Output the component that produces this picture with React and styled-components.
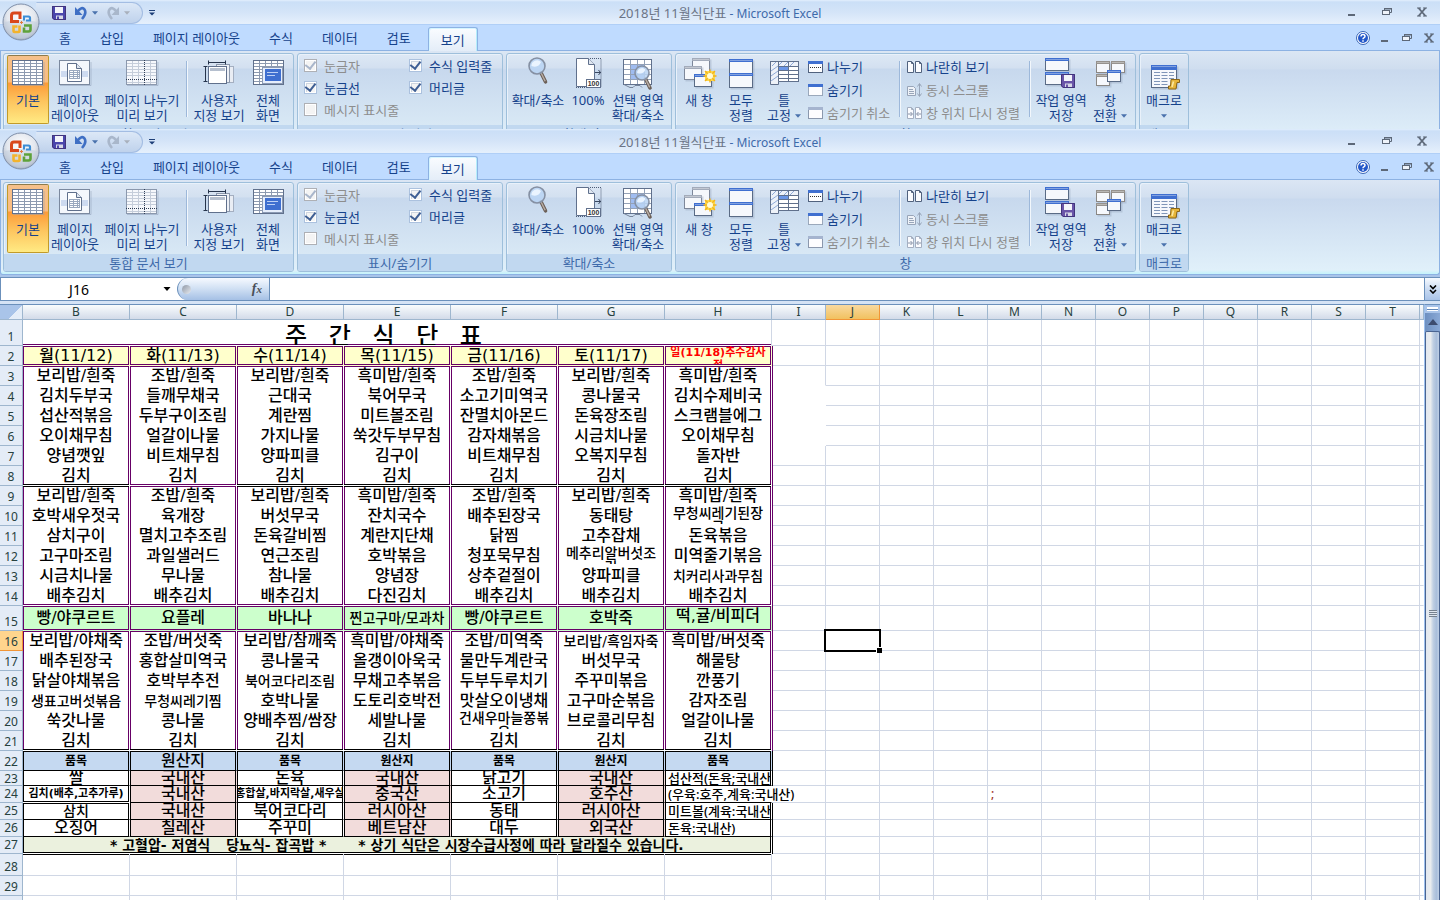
import React from "react";
import styled, { createGlobalStyle, css } from "styled-components";

const uiFont = `"Noto Sans", "Noto Sans CJK KR", sans-serif`;
const sheetFont = `"DejaVu Sans", "Noto Sans CJK KR", sans-serif`;
const koreanFont = `"Noto Sans CJK KR", sans-serif`;
const navy = "#15428b";
const purple = "#660066";

const GlobalStyle = createGlobalStyle`
  * { box-sizing: border-box; }
  html, body, #root { margin: 0; height: 100%; }
  body { overflow: hidden; background: #fff; font-family: ${uiFont}; }
  button, input { font: inherit; color: inherit; margin: 0; padding: 0; border: 0; background: none; border-radius: 0; outline: none; }
  button { cursor: pointer; }
  svg { flex: none; }
`;

/* ---------- window chrome ---------- */

const Page = styled.div`
  display: flex;
  flex-direction: column;
  height: 100vh;
`;

const RibbonFrame = styled.header`
  position: relative;
  flex: none;
  height: ${(p) => (p.$clipped ? "129px" : "148px")};
  overflow: hidden;
  background: #a9c4e9;
  color: ${navy};
  font-size: 13px;
`;

const TitleBar = styled.div`
  display: grid;
  grid-template-columns: 1fr auto 1fr;
  align-items: center;
  height: 25px;
  padding: 0 11px;
  background: linear-gradient(#e3effd 0, #cbdff7 2px, #d4e4f8 50%, #e4effc 96%);
  border-bottom: 1px solid #b0cff7;
`;

const QuickBar = styled.div`
  display: flex;
  align-items: center;
  height: 24px;
  padding: 1px 0 0 25px;
`;

const QuickPill = styled.div`
  display: flex;
  align-items: center;
  gap: 8px;
  width: 107px;
  height: 22px;
  padding: 0 10px 0 15px;
  border: 1px solid #a3bde3;
  border-left-color: transparent;
  border-radius: 0 11px 11px 0;
  background: linear-gradient(#dce8f7, #bfd2ec);
`;

const QuickPair = styled.div`
  display: flex;
  align-items: center;
  gap: 4px;
`;

const IconButton = styled.button`
  display: flex;
  align-items: center;
  justify-content: center;
  width: ${(p) => p.$w || 14}px;
  height: 16px;
`;

const WindowTitle = styled.h1`
  margin: 0;
  padding-top: 2px;
  font-size: 12px;
  line-height: 16px;
  font-weight: 400;
  color: #3e6aaa;
  white-space: pre;
`;

const FileName = styled.span`
  font-size: 13px;
  color: #6b7486;
`;

const WindowButtons = styled.div`
  display: flex;
  justify-content: flex-end;
  align-items: center;
  gap: ${(p) => p.$gap}px;
`;

const OfficeButton = styled.button`
  position: absolute;
  left: 2px;
  top: 3px;
  width: 40px;
  height: 40px;
`;

const TabRow = styled.nav`
  display: flex;
  align-items: flex-end;
  gap: 5px;
  height: 26px;
  padding: 0 4px 0 47px;
  background: #bfdbff;
  border-bottom: 1px solid #8db2e3;
`;

const Tab = styled.button`
  height: 23px;
  padding: 0 12px;
  line-height: 23px;
  white-space: nowrap;
  ${(p) =>
    p.$active &&
    css`
      height: 24px;
      margin-bottom: -1px;
      border: 1px solid #8db2e3;
      border-bottom: 0;
      border-radius: 3px 3px 0 0;
      background: linear-gradient(#fafcff, #e4edf8);
      box-shadow: inset 1px 1px 0 #d5f5ff, inset -1px 0 0 #b5eefc;
      line-height: 22px;
    `}
`;

const TabTools = styled.div`
  display: flex;
  align-items: center;
  gap: 8px;
  margin-left: auto;
  height: 25px;
`;

const RibbonBody = styled.div`
  display: flex;
  gap: 3px;
  height: 95px;
  padding: 2px 2px 3px;
  border: solid #8db2e3;
  border-width: 0 1px 1px;
  border-radius: 0 0 3px 3px;
  background: linear-gradient(#dbe6f4 0, #cfddef 18px, #c9d9ee 19px, #e0f0fa 90px, #c3f3fb 94px);
`;

const Group = styled.section`
  display: flex;
  flex-direction: column;
  flex: none;
  width: ${(p) => p.$w}px;
  height: 90px;
  border: 1px solid #9ebfdb;
  border-radius: 3px;
  box-shadow: inset 1px 1px 0 #e9f1fa;
  background: linear-gradient(#dde8f5 0, #d3e0f0 14px, #c7d8ed 15px, #d8e8f5 71px);
  overflow: hidden;
`;

const GroupBody = styled.div`
  display: flex;
  align-items: flex-start;
  height: 71px;
  padding: 1px 3px 0;
`;

const GroupLabel = styled.h2`
  margin: 0;
  height: 17px;
  padding-top: 1px;
  line-height: 17px;
  font-size: 13px;
  font-weight: 400;
  text-align: center;
  color: #3e6aaa;
  background: #c1d8f0;
`;

const BigButton = styled.button`
  display: flex;
  flex-direction: column;
  align-items: center;
  flex: none;
  width: ${(p) => p.$w}px;
  height: 69px;
  padding-top: 2px;
  line-height: 15px;
  white-space: nowrap;
  ${(p) =>
    p.$on &&
    css`
      border: 1px solid #c29b29;
      border-top-color: #8e7a4a;
      border-radius: 2px;
      padding-top: 1px;
      background: linear-gradient(#f5c08b 0, #fbbd80 26px, #fd9a38 27px, #fdc45e 45px, #ffea83 67px);
    `}
`;

const BigIcon = styled.svg`
  display: block;
  flex: none;
  width: 32px;
  height: 32px;
  margin-bottom: 4px;
`;

const Caption = styled.span`
  display: flex;
  align-items: center;
  gap: 4px;
  height: 15px;
`;

const Separator = styled.div`
  flex: none;
  width: 2px;
  height: 56px;
  margin: 6px 3px 0;
  border-left: 1px solid #9db8da;
  border-right: 1px solid #f2f7fc;
`;

const CheckGrid = styled.div`
  display: grid;
  grid-template-columns: 105px auto;
  grid-auto-rows: 22px;
  padding-left: 3px;
`;

const CheckLabel = styled.label`
  display: flex;
  align-items: center;
  gap: 7px;
  height: 20px;
  white-space: nowrap;
  color: ${(p) => (p.$off ? "#8d8d8d" : navy)};
`;

const CheckBox = styled.input`
  appearance: none;
  display: grid;
  place-items: center;
  flex: none;
  width: 13px;
  height: 13px;
  border: 1px solid #abc1de;
  background: #f4f4f4;
  box-shadow: inset 0 0 0 1px #fff, inset 2px 2px 0 #cfd6e0;
  &:disabled { border-color: #aeb0b5; box-shadow: inset 0 0 0 1px #fff; }
  &:checked::before {
    content: "";
    width: 5px;
    height: 8px;
    margin-top: -2px;
    border: solid #3f5f94;
    border-width: 0 2px 2px 0;
    transform: rotate(38deg);
  }
  &:disabled:checked::before { border-color: #a9b6cb; }
`;

const SmallColumn = styled.div`
  display: grid;
  grid-auto-rows: 23px;
  flex: none;
  width: ${(p) => p.$w}px;
  padding-left: 3px;
`;

const SmallButton = styled.button`
  display: flex;
  align-items: center;
  gap: 3px;
  line-height: 16px;
  white-space: nowrap;
  color: ${(p) => (p.disabled ? "#8d8d8d" : navy)};
`;

/* ---------- formula bar ---------- */

const FormulaBar = styled.div`
  display: flex;
  flex: none;
  height: 24px;
  border: solid #6b90bb;
  border-width: 1px 0 1px 1px;
  background: #fff;
`;

const NameBox = styled.div`
  display: flex;
  align-items: center;
  width: 176px;
`;

const NameInput = styled.input`
  width: 156px;
  height: 22px;
  font-size: 14px;
  text-align: center;
  color: #000;
`;

const FxCap = styled.div`
  display: flex;
  align-items: center;
  justify-content: space-between;
  width: 93px;
  padding: 0 7px 0 4px;
  border: solid #6b90bb;
  border-width: 0 1px 0 1px;
  border-radius: 11px 0 0 11px;
  background: linear-gradient(#f6faff, #cfdff3 50%, #a5c0e5);
`;

const Knob = styled.span`
  width: 9px;
  height: 9px;
  border-radius: 50%;
  background: linear-gradient(135deg, #8f98a6, #e8ebf0);
`;

const FxButton = styled.button`
  font: italic 700 14px/20px "Liberation Serif", serif;
  color: #4a4f58;
`;

const FxSub = styled.span`
  font-size: 11px;
`;

const FormulaInput = styled.input`
  flex: 1;
  min-width: 0;
  height: 22px;
  color: #000;
`;

const ExpandButton = styled.button`
  display: flex;
  align-items: center;
  justify-content: center;
  width: 16px;
  height: 22px;
  border-left: 1px solid #6b90bb;
  background: linear-gradient(#f6faff, #c3d6f0 60%, #a9c3e8);
`;

/* ---------- sheet ---------- */

const Workspace = styled.main`
  display: flex;
  flex: 1;
  min-height: 0;
  border-top: 3px solid #d5e3f5;
`;

const SheetArea = styled.div`
  flex: 1;
  min-width: 0;
  overflow: hidden;
  border-top: 1px solid #6b90bb;
`;

const Sheet = styled.table`
  width: 100%;
  table-layout: fixed;
  border-collapse: separate;
  border-spacing: 0;
  font-family: ${sheetFont};
  color: #000;
`;

const Col = styled.col`
  width: ${(p) => (p.$w ? `${p.$w}px` : "auto")};
`;

const Row = styled.tr`
  height: ${(p) => p.$h}px;
`;

const Corner = styled.td`
  height: 15px;
  padding: 0;
  border: solid #9eb6ce;
  border-width: 0 1px 1px 0;
  background: linear-gradient(135deg, #a9c4e9 62%, #e4edf8 63%);
`;

const ColHead = styled.th`
  height: 15px;
  padding: 0;
  font: 400 12px/14px ${uiFont};
  color: #27413e;
  border: solid ${(p) => (p.$on ? "#f29536" : "#9eb6ce")};
  border-width: 0 1px 1px 0;
  background: ${(p) => (p.$on ? "linear-gradient(#f9d99f, #f1c15f)" : "linear-gradient(#f9fcfd, #d3dbe9)")};
`;

const RowHead = styled.th`
  padding: 0;
  font: 400 12px/15px ${uiFont};
  color: #27413e;
  vertical-align: bottom;
  border: solid ${(p) => (p.$on ? "#f29536" : "#9eb6ce")};
  border-width: 0 1px 1px 0;
  background: ${(p) => (p.$on ? "#ffd58d" : "#e4ecf7")};
`;

const RowHeadText = styled.div`
  height: ${(p) => (p.$h < 17 ? 14 : 16)}px;
`;

const edges = ({ $l, $r, $t, $b }) =>
  [
    $t && `inset 0 1px 0 ${$t}`,
    $b && `inset 0 -1px 0 ${$b}`,
    $l && `inset 1px 0 0 ${$l}`,
    $r && `inset -1px 0 0 ${$r}`,
  ]
    .filter(Boolean)
    .join(", ") || "none";

const Cell = styled.td`
  position: relative;
  padding: 0;
  vertical-align: top;
  background: ${(p) => p.$bg || "#fff"};
  border-right: 1px solid ${(p) => p.$gapR || "#d0d7e5"};
  border-bottom: ${(p) => (p.$open ? "0" : `1px solid ${p.$gapB || "#d0d7e5"}`)};
  box-shadow: ${edges};
  ${(p) =>
    p.$outline &&
    css`
      &::before {
        content: "";
        position: absolute;
        left: 0;
        top: 0;
        bottom: -1px;
        width: 1px;
        background: ${p.$outline};
      }
    `}
`;

const CellText = styled.div`
  display: flex;
  justify-content: ${(p) => (p.$left ? "flex-start" : "center")};
  align-items: ${(p) => (p.$top ? "flex-start" : "center")};
  height: ${(p) => p.$h}px;
  margin: 0 1px;
  padding-left: ${(p) => (p.$left ? 2 : 0)}px;
  overflow: ${(p) => (p.$spill ? "visible" : "hidden")};
  text-align: center;
  white-space: pre;
  font-family: ${(p) => (p.$left ? uiFont : sheetFont)};
  font-size: ${(p) => p.$size || 16}px;
  line-height: ${(p) => p.$lh || 18}px;
  font-weight: ${(p) => p.$weight || 500};
  color: ${(p) => p.$color || "#000"};
`;

const SheetTitle = styled(CellText)`
  font-family: ${koreanFont};
  padding-top: 2px;
`;

const NoteText = styled(CellText)`
  gap: 16px;
  justify-content: flex-start;
  padding-left: 86px;
`;

const Cursor = styled.div`
  position: absolute;
  z-index: 1;
  inset: -2px;
  border: 2px solid #000;
  &::after {
    content: "";
    position: absolute;
    right: -3px;
    bottom: -3px;
    width: 5px;
    height: 5px;
    background: #000;
    border: solid #fff;
    border-width: 1px 0 0 1px;
  }
`;

const ScrollColumn = styled.div`
  display: flex;
  flex-direction: column;
  flex: none;
  width: 16px;
  border-left: 1px solid #9dc0ee;
  border-top: 1px solid #6b90bb;
  background: #7a9ccb;
`;

const SplitHandle = styled.div`
  height: 8px;
  border: 2px solid #a9c4e9;
  background: #fff;
  box-shadow: inset 0 2px 0 #fff, inset 0 3px 0 #5f86b8;
`;

const ScrollButton = styled.button`
  display: flex;
  align-items: center;
  justify-content: center;
  height: 18px;
  background: linear-gradient(90deg, #6d8fc0, #8aa9d6);
`;

const Thumb = styled.div`
  display: flex;
  flex: 1;
  align-items: center;
  justify-content: center;
  border: 1px solid #4a6491;
  border-bottom: 0;
  border-radius: 2px 2px 0 0;
  background: linear-gradient(90deg, #e3e8ef 0, #e9ecef 35%, #c0cfe3 55%, #a9bedb 80%, #bfcfe6);
`;

const Grip = styled.div`
  width: 8px;
  height: 7px;
  margin-bottom: 6px;
  background: repeating-linear-gradient(#76818f 0 1px, #dfe6ef 1px 2px);
`;

/* ---------- drawings ---------- */

const Arrow = ({ color = "#4a72ad", w = 7 }) => (
  <svg width={w} height="4" viewBox="0 0 7 4"><path d="M0 0h7L3.5 4z" fill={color} /></svg>
);

const lines = (xs, ys, x0, y0, x1, y1) =>
  xs.map((x) => `M${x} ${y0}V${y1}`).join("") + ys.map((y) => `M${x0} ${y}H${x1}`).join("");

const Win = ({ x, y, w, h, c = "#3f6fd0", s = "#5a6b85", bar = 3 }) => (
  <g>
    <rect x={x + 1.5} y={y + 1.5} width={w} height={h} fill="#8b9bb5" opacity="0.35" />
    <rect x={x + 0.5} y={y + 0.5} width={w - 1} height={h - 1} fill="#f6f8fc" stroke={s} />
    <rect x={x} y={y} width={w} height={bar} fill={c} />
    <path d={`M${x + 1} ${y + 1.5}h${w - 2}`} stroke="#fff" opacity="0.35" />
  </g>
);

const Lens = ({ cx, cy, r }) => (
  <g>
    <path d={`M${cx + r * 0.5} ${cy + r * 0.85}l4.5 9`} stroke="#6c6058" strokeWidth="3.6" strokeLinecap="round" />
    <path d={`M${cx + r * 0.5} ${cy + r * 0.85}l4.2 8.4`} stroke="#b9aea6" strokeWidth="1.4" />
    <circle cx={cx} cy={cy} r={r} fill="#b9d4f3" fillOpacity="0.85" stroke="#8590a3" strokeWidth="1.6" />
    <path d={`M${cx - r * 0.7} ${cy}a${r * 0.7} ${r * 0.7} 0 0 1 ${r * 1.2} ${-r * 0.5}q-${r * 0.3} ${r * 0.8} -${r * 1.2} ${r * 0.5}`} fill="#eaf4ff" />
  </g>
);

const Floppy = ({ x, y, s = 14, c = "#6a55a8" }) => (
  <g transform={`translate(${x} ${y}) scale(${s / 14})`}>
    <path d="M0 0h14v14H2l-2-2z" fill={c} />
    <path d="M3 1h8v6H3z" fill="#f3f4fa" />
    <path d="M4 9.5h7V14H4z" fill="#d7d9e6" />
    <path d="M5 10.5h2V14H5z" fill={c} />
    <path d="M0.5 0.5h13v13H2.2l-1.7-1.7z" fill="none" stroke="#42347c" />
  </g>
);

const bigIcons = {
  normal: (
    <g>
      <rect x="0.5" y="3.5" width="30" height="24" fill="#fff" stroke="#60708c" />
      <path d={lines([6.5, 12.5, 18.5, 24.5], [6.5, 9.5, 12.5, 15.5, 18.5, 21.5, 24.5], 1, 4, 30, 27)} stroke="#8d9ab0" />
      <path d="M1 28.5h31V5" stroke="#8b9bb5" fill="none" opacity="0.5" />
    </g>
  ),
  pageLayout: (
    <g>
      <rect x="0.5" y="3.5" width="30" height="24" fill="#f4f7fc" stroke="#7b899f" />
      <path d="M2 14h27v6H2z" fill="#cddaf0" />
      <path d="M8.5 6.5h9l5 5v13h-14z" fill="#fff" stroke="#60708c" />
      <path d="M17.5 6.5v5h5" fill="#dfe6f0" stroke="#60708c" />
      <path d={lines([10.5, 14.5, 18.5, 20.5], [13.5, 15.5, 17.5, 19.5, 21.5], 10, 13, 21, 22)} stroke="#9aa8be" />
      <path d="M1 28.5h31V5" stroke="#8b9bb5" fill="none" opacity="0.5" />
    </g>
  ),
  pageBreak: (
    <g>
      <rect x="0.5" y="3.5" width="30" height="24" fill="#f6f8fc" stroke="#8b98ad" />
      <path d={lines([6.5, 12.5, 24.5], [6.5, 9.5, 12.5, 15.5, 18.5, 25.5], 1, 4, 30, 27)} stroke="#c5cdda" />
      <path d="M18.5 3v25M0 22.5h31" stroke="#2f3d55" strokeDasharray="1 1" />
      <path d="M1 28.5h31V5" stroke="#8b9bb5" fill="none" opacity="0.5" />
    </g>
  ),
  custom: (
    <g fill="none">
      <rect x="16.5" y="9.5" width="14" height="16" fill="#e9edf4" stroke="#a4afc1" />
      <rect x="13.5" y="7.5" width="13" height="18" fill="#eef1f7" stroke="#8c98ac" />
      <rect x="5.5" y="9.5" width="18" height="17" fill="#fff" stroke="#60708c" />
      <rect x="7" y="11" width="15" height="3" fill="#b5bfce" />
      <path d="M5 5.5h18M5.5 3.5v4M22.5 3.5v4M2.5 9v16M0.5 9.5h4M0.5 24.5h4" stroke="#26344c" />
    </g>
  ),
  full: (
    <g>
      <rect x="1.5" y="3.5" width="30" height="24" fill="#fff" stroke="#60708c" />
      <path d={lines([7.5, 13.5, 19.5, 25.5], [6.5, 9.5, 12.5, 15.5, 18.5, 21.5, 24.5], 2, 4, 31, 27)} stroke="#8d9ab0" />
      <rect x="10.5" y="10.5" width="20" height="16" fill="#e6eefc" stroke="#8c9bb5" />
      <rect x="13" y="12" width="16" height="12" fill="#3f6fd0" />
      <path d="M15 15.5h11M15 18.5h8" stroke="#bdd0f5" />
    </g>
  ),
  zoom: <Lens cx={15} cy={9} r={8} />,
  hundred: (
    <g>
      <path d="M4.5 1.5h12l6 6v22h-18z" fill="#fff" stroke="#60708c" />
      <path d="M16.5 1.5v6h6" fill="#dfe6f0" stroke="#60708c" />
      <path d="M18 1.5h11v28M4 30.5h12" stroke="#4c5b75" strokeDasharray="1 1" fill="none" />
      <path d="M23 15.5h6M26.5 13l2 2.5-2 2.5" stroke="#3a4860" fill="none" />
      <rect x="14.5" y="22.5" width="14" height="8" fill="#fff" stroke="#60708c" />
      <text x="21.5" y="29" textAnchor="middle" fontSize="7" fontWeight="700" fontFamily="Liberation Sans, sans-serif" fill="#333">100</text>
    </g>
  ),
  selection: (
    <g>
      <rect x="1.5" y="2.5" width="28" height="25" fill="#fff" stroke="#60708c" />
      <rect x="9" y="8" width="14" height="14" fill="#9fbcf0" />
      <path d={lines([8.5, 15.5, 22.5], [7.5, 12.5, 17.5, 22.5], 2, 3, 29, 27)} stroke="#93a1b7" />
      <path d="M2 27.5l6 3h3l2-2h5l2 2" fill="none" stroke="#76849a" />
      <Lens cx={20} cy={16} r={7} />
    </g>
  ),
  newWindow: (
    <g>
      <Win x={9} y={1} w={18} h={17} c="#a3abba" s="#7d879a" />
      <Win x={1} y={9} w={18} h={14} c="#a3abba" s="#7d879a" />
      <Win x={11} y={17} w={18} h={13} />
      <path d="M22 14h10v10H22z" fill="#fbd84a" />
      <path d="M27 12.500v13M20.500 19h13M22 14l10 10M32 14l-10 10" stroke="#f2b21c" strokeWidth="1.400" />
      <circle cx="27" cy="19" r="3" fill="#fffbd6" />
    </g>
  ),
  arrange: (
    <g>
      <Win x={4} y={2} w={24} h={15} />
      <Win x={4} y={16} w={24} h={15} />
    </g>
  ),
  freeze: (
    <g>
      <rect x="2.5" y="4.5" width="28" height="20" fill="#fff" stroke="#60708c" />
      <path d="M3 5h27v4H11v18H3z" fill="#eef2f9" />
      <path d="M4 9l4-4M10 9l4-4M16 9l4-4M22 9l4-4M3 14l7-5M3 19l7-5M3 24l7-5" stroke="#8ea9d8" />
      <path d={lines([10.5, 20.5], [9.5, 13.5, 17.5, 21.5], 10, 5, 30, 25)} stroke="#60708c" />
      <rect x="11" y="10" width="9" height="3" fill="#6b96e6" />
      <path d="M2.500 24.500v3h8v-3" fill="#eef2f8" stroke="#60708c" />
    </g>
  ),
  workspace: (
    <g>
      <Win x={0} y={1} w={24} h={13} />
      <Win x={0} y={15} w={24} h={13} />
      <Floppy x={16} y={17} s={14} />
    </g>
  ),
  switchWin: (
    <g>
      <Win x={2} y={4} w={14} h={12} c="#96928e" s="#8a8784" />
      <Win x={17} y={4} w={14} h={12} c="#96928e" s="#8a8784" />
      <Win x={2} y={17} w={14} h={12} c="#96928e" s="#8a8784" />
      <Win x={13} y={13} w={14} h={12} />
    </g>
  ),
  macro: (
    <g>
      <Win x={3} y={8} w={26} h={23} bar={5} />
      <path d="M6 15.5h6M6 18.5h6M6 21.5h6M6 24.5h6M6 27.5h6M13.5 15.5h6M13.5 18.5h6M13.5 21.5h6M13.5 24.5h6M13.5 27.5h6M21 15.5h5M21 18.5h5M21 21.5h5" stroke="#7f95b8" />
      <path d="M23 22.5h8.5v3H29l-1 6.500h-7.500v-3h2z" fill="#e6b53a" stroke="#8a6516" />
      <path d="M25.5 24.500l-1.500 5.500" stroke="#fbe8a0" strokeWidth="1.600" />
    </g>
  ),
};

const smallWin = (c, s, dash, mid) => (
  <g>
    <rect x="0.5" y="2.5" width="14" height="11" fill="#fdfdff" stroke={s} strokeDasharray={dash} />
    <rect x="0" y="2" width="15" height="3" fill={c} />
    {mid && <path d="M2 8.5h11" stroke="#333" strokeDasharray="1 1" />}
  </g>
);

const pages = (s, arrows) => (
  <g>
    <path d="M0.5 2.5h4l2 2v9h-6zM8.5 2.5h4l2 2v9h-6z" fill="#fbfcff" stroke={s} />
    <path d="M4.5 2.5v2h2M12.5 2.5v2h2" fill="none" stroke={s} />
    {arrows && <path d="M1 9h4M3.5 7l2 2-2 2M14 9h-4M11.5 7l-2 2 2 2" fill="none" stroke="#8793a8" />}
  </g>
);

const smallIcons = {
  split: smallWin("#3f6fd0", "#51627e", undefined, true),
  hide: smallWin("#3f6fd0", "#51627e", "1 1"),
  unhide: smallWin("#a5b4cf", "#8b98ad"),
  side: pages("#51627e"),
  sync: (
    <g stroke="#98a5b9" fill="none">
      <path d="M0.5 4.5h6l2 2v7h-8z" fill="#eef2f8" />
      <path d="M2 7.5h4M2 9.5h5M2 11.5h5" />
      <path d="M12.5 2v12M10.5 4.5l2-3 2 3M10.5 11.5l2 3 2-3" />
    </g>
  ),
  reset: pages("#a4afc1", true),
};

const SmallIcon = ({ name }) => (
  <svg width="16" height="16" viewBox="0 0 16 16">{smallIcons[name]}</svg>
);

const Minimize = () => (
  <svg width="8" height="12" viewBox="0 0 8 12"><path d="M0 8h7v2H0z" fill="#5d6878" /></svg>
);
const Restore = () => (
  <svg width="10" height="10" viewBox="0 0 10 10">
    <path d="M2.5 3V1.5h7v4H8" fill="none" stroke="#5d6878" />
    <path d="M2 1h8v1.500H2z" fill="#5d6878" />
    <rect x="0.5" y="3.5" width="7" height="4" fill="#eef3fa" stroke="#5d6878" />
  </svg>
);
const Close = () => (
  <svg width="10" height="10" viewBox="0 0 10 10">
    <path d="M1.5 1l7 8M8.5 1l-7 8" stroke="#5d6878" strokeWidth="1.8" />
    <path d="M0 1h4M6 1h4M0 9h4M6 9h4" stroke="#5d6878" />
  </svg>
);

const OfficeLogo = () => (
  <svg width="40" height="40" viewBox="0 0 40 40">
    <defs>
      <radialGradient id="orb" cx="50%" cy="35%" r="65%">
        <stop offset="0" stopColor="#fff" />
        <stop offset="0.6" stopColor="#e3e7ee" />
        <stop offset="1" stopColor="#a7b2c4" />
      </radialGradient>
    </defs>
    <circle cx="19" cy="19" r="18" fill="url(#orb)" stroke="#7f8fa9" />
    <path d="M2.5 19a16.5 16.5 0 0 0 33 0q-16 -4 -33 0" fill="#c3cddd" opacity="0.55" />
    <g fill="none" strokeWidth="3">
      <path d="M17 18.5H9.5v-6q0-2.500 2.500-2.500h6v6" stroke="#d9471c" />
      <path d="M22 17.5v-4h4.500q1.500 0 1.500 1.500v2.500h-4" stroke="#3d8ed6" strokeWidth="2.200" />
      <path d="M17.5 22.500v6q0 .5-1 .5h-4q-1 0-1-1v-4.500h4" stroke="#f3b32c" strokeWidth="2.600" />
      <path d="M22 22.500h6.500v4q0 2-2 2H22v-4" stroke="#5ea23a" strokeWidth="2.600" />
    </g>
    <path d="M19.5 18v3M18 19.500h3" stroke="#e47a3c" />
  </svg>
);

const Undo = ({ color, mirrored }) => (
  <svg width="14" height="15" viewBox="0 0 14 15">
    <g transform={mirrored ? "matrix(-1 0 0 1 14 0)" : undefined}>
      <path d="M1 2v8h7.500z" fill={color} />
      <path d="M3.500 6.500Q8 1 10.500 4.500Q13 8.500 8 14" fill="none" stroke={color} strokeWidth="2.600" />
    </g>
  </svg>
);

/* ---------- ribbon ---------- */

function Big({ w, icon, text, on, arrow }) {
  return (
    <BigButton $w={w} $on={on} aria-pressed={on ? true : undefined}>
      <BigIcon viewBox="0 0 32 32" overflow="visible">{bigIcons[icon]}</BigIcon>
      {text.map((t, i) => (
        <Caption key={t}>
          {t}
          {arrow === "beside" && i === text.length - 1 && <Arrow w={6} />}
        </Caption>
      ))}
      {arrow === "below" && <Caption><Arrow w={6} /></Caption>}
    </BigButton>
  );
}

function Small({ icon, text, disabled }) {
  return (
    <SmallButton disabled={disabled}>
      <SmallIcon name={icon} />
      {text}
    </SmallButton>
  );
}

function Check({ label, checked, disabled }) {
  return (
    <CheckLabel $off={disabled}>
      <CheckBox type="checkbox" defaultChecked={checked} disabled={disabled} />
      {label}
    </CheckLabel>
  );
}

const tabs = ["홈", "삽입", "페이지 레이아웃", "수식", "데이터", "검토", "보기"];

function Ribbon({ clipped }) {
  return (
    <RibbonFrame $clipped={clipped}>
      <TitleBar>
        <QuickBar>
          <QuickPill>
            <IconButton aria-label="저장">
              <svg width="14" height="14" viewBox="0 0 14 14"><Floppy x={0} y={0} c="#4a46ac" /></svg>
            </IconButton>
            <QuickPair>
              <IconButton aria-label="실행 취소"><Undo color="#3f6fc4" /></IconButton>
              <Arrow w={6} />
            </QuickPair>
            <QuickPair>
              <IconButton aria-label="다시 실행"><Undo color="#a9b7cb" mirrored /></IconButton>
              <Arrow w={6} color="#a9b0bc" />
            </QuickPair>
          </QuickPill>
          <IconButton $w={18} aria-label="빠른 실행 도구 모음 사용자 지정">
            <svg width="6" height="6" viewBox="0 0 6 6"><path d="M0 0h6v1H0zM0 2.500h6L3 5.500z" fill="#1e3f78" /></svg>
          </IconButton>
        </QuickBar>
        <WindowTitle><FileName>2018년 11월식단표</FileName> - Microsoft Excel</WindowTitle>
        <WindowButtons $gap={21}>
          <IconButton aria-label="최소화"><Minimize /></IconButton>
          <IconButton aria-label="이전 크기로"><Restore /></IconButton>
          <IconButton aria-label="닫기"><Close /></IconButton>
        </WindowButtons>
      </TitleBar>
      <TabRow>
        {tabs.map((t) => (
          <Tab key={t} $active={t === "보기"}>{t}</Tab>
        ))}
        <TabTools>
          <IconButton aria-label="도움말">
            <svg width="14" height="14" viewBox="0 0 14 14">
              <circle cx="7" cy="7" r="6.500" fill="#fff" stroke="#3a66b5" />
              <circle cx="7" cy="7" r="5" fill="#2458c9" />
              <path d="M5 5.500q0-2 2-2t2 1.800q0 1-1.200 1.600-.8.4-.8 1.300M7 9.300v1.400" stroke="#fff" strokeWidth="1.500" fill="none" />
            </svg>
          </IconButton>
          <IconButton aria-label="창 최소화"><Minimize /></IconButton>
          <IconButton aria-label="창 복원"><Restore /></IconButton>
          <IconButton aria-label="창 닫기"><Close /></IconButton>
        </TabTools>
      </TabRow>
      <RibbonBody>
        <Group $w={291}>
          <GroupBody>
            <Big w={42} icon="normal" text={["기본"]} on />
            <Big w={52} icon="pageLayout" text={["페이지", "레이아웃"]} />
            <Big w={82} icon="pageBreak" text={["페이지 나누기", "미리 보기"]} />
            <Separator />
            <Big w={56} icon="custom" text={["사용자", "지정 보기"]} />
            <Big w={42} icon="full" text={["전체", "화면"]} />
          </GroupBody>
          <GroupLabel>통합 문서 보기</GroupLabel>
        </Group>
        <Group $w={206}>
          <GroupBody>
            <CheckGrid>
              <Check label="눈금자" checked disabled />
              <Check label="수식 입력줄" checked />
              <Check label="눈금선" checked />
              <Check label="머리글" checked />
              <Check label="메시지 표시줄" disabled />
            </CheckGrid>
          </GroupBody>
          <GroupLabel>표시/숨기기</GroupLabel>
        </Group>
        <Group $w={166}>
          <GroupBody>
            <Big w={56} icon="zoom" text={["확대/축소"]} />
            <Big w={44} icon="hundred" text={["100%"]} />
            <Big w={56} icon="selection" text={["선택 영역", "확대/축소"]} />
          </GroupBody>
          <GroupLabel>확대/축소</GroupLabel>
        </Group>
        <Group $w={461}>
          <GroupBody>
            <Big w={40} icon="newWindow" text={["새 창"]} />
            <Big w={44} icon="arrange" text={["모두", "정렬"]} />
            <Big w={42} icon="freeze" text={["틀", "고정"]} arrow="beside" />
            <SmallColumn $w={91}>
              <Small icon="split" text="나누기" />
              <Small icon="hide" text="숨기기" />
              <Small icon="unhide" text="숨기기 취소" disabled />
            </SmallColumn>
            <Separator />
            <SmallColumn $w={122}>
              <Small icon="side" text="나란히 보기" />
              <Small icon="sync" text="동시 스크롤" disabled />
              <Small icon="reset" text="창 위치 다시 정렬" disabled />
            </SmallColumn>
            <Separator />
            <Big w={54} icon="workspace" text={["작업 영역", "저장"]} />
            <Big w={44} icon="switchWin" text={["창", "전환"]} arrow="beside" />
          </GroupBody>
          <GroupLabel>창</GroupLabel>
        </Group>
        <Group $w={50}>
          <GroupBody>
            <Big w={42} icon="macro" text={["매크로"]} arrow="below" />
          </GroupBody>
          <GroupLabel>매크로</GroupLabel>
        </Group>
      </RibbonBody>
      <OfficeButton aria-label="Office 단추"><OfficeLogo /></OfficeButton>
    </RibbonFrame>
  );
}

/* ---------- sheet data ---------- */

const menuCols = ["B", "C", "D", "E", "F", "G", "H"];
const plainCols = ["I", "J", "K", "L", "M", "N", "O", "P", "Q", "R", "S", "T"];
const s14 = (t) => ({ t, size: 14 });
const two = (t, next) => ({ t: `${t}\n${next}`, size: 14, lh: 14, top: true });

const rows = [
  { n: 2, h: 20, kind: "date", c: ["월(11/12)", "화(11/13)", "수(11/14)", "목(11/15)", "금(11/16)", "토(11/17)", { t: "일(11/18)추수감사\n절", size: 11, lh: 13, top: true, color: "#f00", weight: 700 }] },
  { n: 3, h: 20, c: ["보리밥/흰죽", "조밥/흰죽", "보리밥/흰죽", "흑미밥/흰죽", "조밥/흰죽", "보리밥/흰죽", "흑미밥/흰죽"] },
  { n: 4, h: 20, c: ["김치두부국", "들깨무채국", "근대국", "북어무국", "소고기미역국", "콩나물국", "김치수제비국"] },
  { n: 5, h: 20, c: ["섭산적볶음", "두부구이조림", "계란찜", "미트볼조림", "잔멸치아몬드", "돈육장조림", "스크램블에그"] },
  { n: 6, h: 20, c: ["오이채무침", "얼갈이나물", "가지나물", "쑥갓두부무침", "감자채볶음", "시금치나물", "오이채무침"] },
  { n: 7, h: 20, c: ["양념깻잎", "비트채무침", "양파피클", "김구이", "비트채무침", "오복지무침", "돌자반"] },
  { n: 8, h: 20, c: ["김치", "김치", "김치", "김치", "김치", "김치", "김치"] },
  { n: 9, h: 20, c: ["보리밥/흰죽", "조밥/흰죽", "보리밥/흰죽", "흑미밥/흰죽", "조밥/흰죽", "보리밥/흰죽", "흑미밥/흰죽"] },
  { n: 10, h: 20, c: ["호박새우젓국", "육개장", "버섯무국", "잔치국수", "배추된장국", "동태탕", two("무청씨레기된장", "국")] },
  { n: 11, h: 20, c: ["삼치구이", "멸치고추조림", "돈육갈비찜", "계란지단채", "닭찜", "고추잡채", "돈육볶음"] },
  { n: 12, h: 20, c: ["고구마조림", "과일샐러드", "연근조림", "호박볶음", "청포묵무침", two("메추리알버섯조", "림"), "미역줄기볶음"] },
  { n: 13, h: 20, c: ["시금치나물", "무나물", "참나물", "양념장", "상추겉절이", "양파피클", s14("치커리사과무침")] },
  { n: 14, h: 20, c: ["배추김치", "배추김치", "배추김치", "다진김치", "배추김치", "배추김치", "배추김치"] },
  { n: 15, h: 25, kind: "snack", c: ["빵/야쿠르트", "요플레", "바나나", s14("찐고구마/모과차"), "빵/야쿠르트", "호박죽", { t: "떡,귤/비피더", top: true, lh: 20 }] },
  { n: 16, h: 20, c: ["보리밥/야채죽", "조밥/버섯죽", "보리밥/참깨죽", "흑미밥/야채죽", "조밥/미역죽", s14("보리밥/흑임자죽"), "흑미밥/버섯죽"] },
  { n: 17, h: 20, c: ["배추된장국", "홍합살미역국", "콩나물국", "올갱이아욱국", "물만두계란국", "버섯무국", "해물탕"] },
  { n: 18, h: 20, c: ["닭살야채볶음", "호박부추전", s14("북어코다리조림"), "무채고추볶음", "두부두루치기", "주꾸미볶음", "깐풍기"] },
  { n: 19, h: 20, c: [s14("생표고버섯볶음"), s14("무청씨레기찜"), "호박나물", "도토리호박전", "맛살오이냉채", "고구마순볶음", "감자조림"] },
  { n: 20, h: 20, c: ["쑥갓나물", "콩나물", "양배추찜/쌈장", "세발나물", two("건새우마늘쫑볶", "음"), "브로콜리무침", "얼갈이나물"] },
  { n: 21, h: 20, c: ["김치", "김치", "김치", "김치", "김치", "김치", "김치"] },
  { n: 22, h: 20, kind: "head", c: ["품목", { t: "원산지", size: 16, weight: 500 }, "품목", "원산지", "품목", "원산지", "품목"] },
  { n: 23, h: 15, kind: "origin", c: ["쌀", "국내산", "돈육", "국내산", "닭고기", "국내산", { t: "섭산적(돈육;국내산", left: true }] },
  { n: 24, h: 17, kind: "origin", c: [{ t: "김치(배추,고추가루)", size: 11, weight: 700, double: true }, "국내산", { t: "홍합살,바지락살,새우살", size: 11, weight: 700 }, "중국산", "소고기", "호주산", { t: "(우육:호주,계육:국내산)", left: true, spill: true }] },
  { n: 25, h: 17, kind: "origin", c: [{ t: "삼치", size: 14, topLine: true }, "국내산", "북어코다리", "러시아산", "동태", "러시아산", { t: "미트볼(계육:국내산", left: true }] },
  { n: 26, h: 17, kind: "origin", c: ["오징어", "칠레산", "주꾸미", "베트남산", "대두", "외국산", { t: "돈육:국내산)", left: true }] },
];

const lastRowLine = { 2: purple, 14: purple, 15: purple, 21: "#000" };
const firstRowLine = { 2: purple, 3: purple, 15: purple, 16: purple, 22: "#000" };

function MenuCell({ row, col, value }) {
  const cell = typeof value === "string" ? { t: value } : value;
  const origin = row.kind === "origin";
  const dark = origin || row.kind === "head";
  const side = dark ? "#000" : purple;
  const bg =
    row.kind === "date" ? "#ffffcc"
    : row.kind === "snack" ? "#ccffcc"
    : row.kind === "head" ? "#c5d9f1"
    : origin && col % 2 === 1 ? "#f2dcdb"
    : "#ffffff";
  const mid = col === 1 ? purple : "#000";
  const bottom = row.n === 8 ? mid : cell.double ? "#000" : lastRowLine[row.n];
  const top = row.n === 9 ? mid : cell.topLine ? "#000" : firstRowLine[row.n];
  const single = dark && !cell.double;
  const size = cell.size || (row.kind === "head" ? 12 : cell.left ? 13 : 16);
  return (
    <Cell
      $bg={bg}
      $gapR={bg}
      $gapB={single ? "#000" : bg}
      $open={!dark && !bottom}
      $l={side}
      $r={cell.spill ? undefined : side}
      $t={top}
      $b={bottom}
    >
      <CellText
        $h={row.h - (cell.top ? 2 : 1)}
        $size={size}
        $lh={cell.lh}
        $top={cell.top}
        $left={cell.left}
        $spill={cell.spill}
        $color={cell.color}
        $weight={cell.weight || (row.kind === "head" ? 700 : 500)}
      >
        {cell.t}
      </CellText>
    </Cell>
  );
}

function PlainCells({ n }) {
  const outline = n === 24 || n < 2 || n > 27 ? undefined : n <= 21 ? purple : "#000";
  return (
    <>
      {plainCols.map((c) => {
        const blank = c === "I" && n >= 3 && n <= 6;
        return (
          <Cell
            key={c}
            $bg={c === "I" && n === 24 ? "transparent" : undefined}
            $outline={c === "I" ? outline : undefined}
            $gapB={blank ? "#fff" : undefined}
            $gapR={blank && n > 3 ? "#fff" : undefined}
          >
            {c === "J" && n === 16 && <Cursor />}
            {c === "M" && n === 24 && <CellText $h={16} $left $size={12} $color="#a0301c">;</CellText>}
          </Cell>
        );
      })}
      <Cell $gapR="transparent" />
    </>
  );
}

function Head({ n, h }) {
  return (
    <RowHead scope="row" $on={n === 16}>
      <RowHeadText $h={h}>{n}</RowHeadText>
    </RowHead>
  );
}

function Spreadsheet() {
  return (
    <Sheet>
      <colgroup>
        <Col $w={23} />
        {menuCols.map((c) => <Col key={c} $w={107} />)}
        {plainCols.map((c) => <Col key={c} $w={54} />)}
        <Col />
      </colgroup>
      <thead>
        <tr>
          <Corner />
          {[...menuCols, ...plainCols].map((c) => (
            <ColHead key={c} scope="col" $on={c === "J"}>{c}</ColHead>
          ))}
          <ColHead />
        </tr>
      </thead>
      <tbody>
        <Row $h={26}>
          <Head n={1} h={26} />
          <Cell colSpan={7} $gapB="#fff" $b={purple}>
            <SheetTitle $h={25} $size={24} $lh={24}>{"주    간    식    단    표     "}</SheetTitle>
          </Cell>
          <PlainCells n={1} />
        </Row>
        {rows.map((row) => (
          <Row key={row.n} $h={row.h}>
            <Head n={row.n} h={row.h} />
            {row.c.map((value, i) => <MenuCell key={i} row={row} col={i} value={value} />)}
            <PlainCells n={row.n} />
          </Row>
        ))}
        <Row $h={17}>
          <Head n={27} h={17} />
          <Cell colSpan={7} $bg="#ebf1de" $gapB="#fff" $gapR="#fff" $l="#000" $r="#000" $b="#000">
            <NoteText $h={16} $size={14} $lh={15} $weight={700}>
              <span>* 고혈압- 저염식</span>
              <span>당뇨식- 잡곡밥 *</span>
              <span />
              <span>* 상기 식단은 시장수급사정에 따라 달라질수 있습니다.</span>
            </NoteText>
          </Cell>
          <PlainCells n={27} />
        </Row>
        {[28, 29, 30].map((n) => (
          <Row key={n} $h={n === 28 ? 22 : 20}>
            <Head n={n} h={20} />
            {menuCols.map((c) => <Cell key={c} $t={n === 28 ? "#000" : undefined} />)}
            <PlainCells n={n} />
          </Row>
        ))}
      </tbody>
    </Sheet>
  );
}

export default function App() {
  return (
    <Page>
      <GlobalStyle />
      <Ribbon clipped />
      <Ribbon />
      <FormulaBar>
        <NameBox>
          <NameInput aria-label="이름 상자" defaultValue="J16" />
          <IconButton $w={20} aria-label="이름 목록"><Arrow color="#000" w={8} /></IconButton>
        </NameBox>
        <FxCap>
          <Knob />
          <FxButton aria-label="함수 삽입">f<FxSub>x</FxSub></FxButton>
        </FxCap>
        <FormulaInput aria-label="수식 입력줄" />
        <ExpandButton aria-label="수식 입력줄 확장">
          <svg width="8" height="9" viewBox="0 0 8 9"><path d="M1 0.5l3 3 3-3M1 5l3 3 3-3" fill="none" stroke="#000" strokeWidth="1.6" /></svg>
        </ExpandButton>
      </FormulaBar>
      <Workspace>
        <SheetArea><Spreadsheet /></SheetArea>
        <ScrollColumn>
          <SplitHandle />
          <ScrollButton aria-label="위로 스크롤">
            <svg width="10" height="6" viewBox="0 0 10 6"><path d="M5 0l5 6H0z" fill="#3d4c6e" /></svg>
          </ScrollButton>
          <Thumb><Grip /></Thumb>
        </ScrollColumn>
      </Workspace>
    </Page>
  );
}
